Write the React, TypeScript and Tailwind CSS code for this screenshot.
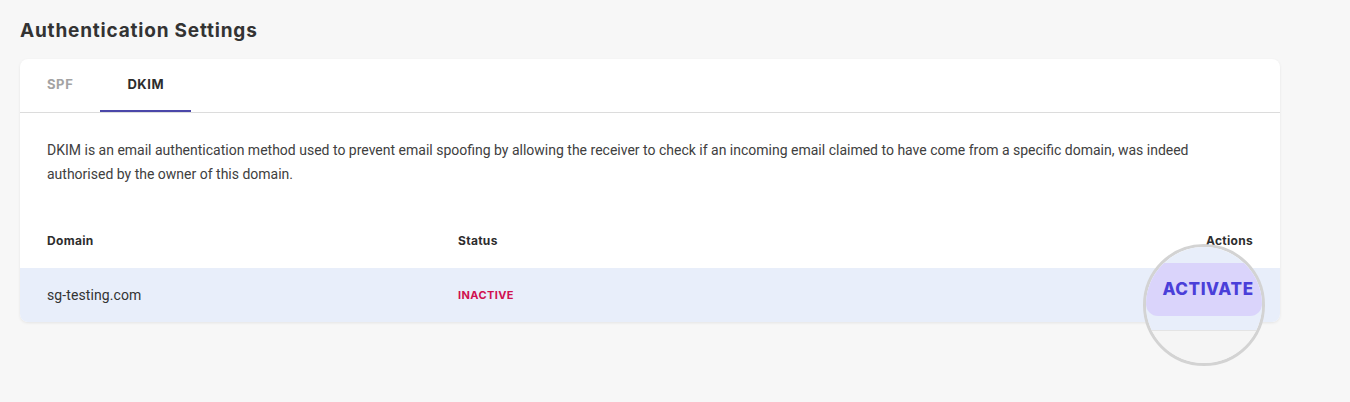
import React, { useState } from 'react';

const heading = { fontFamily: 'Inter, "DejaVu Sans", sans-serif' };
const body = { fontFamily: 'Roboto, "Liberation Sans", sans-serif' };

interface DomainRow {
  domain: string;
  status: 'ACTIVE' | 'INACTIVE';
}

const rows: DomainRow[] = [{ domain: 'sg-testing.com', status: 'INACTIVE' }];

// zoomed-in lens sitting over the activate button
const Magnifier: React.FC = () => (
  <div className="absolute left-[-110px] top-[-24px] w-[122px] h-[122px] rounded-full border-[3px] border-[#d3d3d3] overflow-hidden z-10">
    <div className="flex flex-col w-full h-full">
      <div className="h-[83px] bg-[#e8eefa] flex items-start pt-[16px] shrink-0">
        <div className="w-[116px] h-[53px] rounded-[12px] bg-[#dad4fb] flex items-center justify-center pl-[8px] text-[17px] font-extrabold tracking-[0.6px] text-[#4a3fd9]" style={heading}>
          ACTIVATE
        </div>
      </div>
      <div className="flex-1 bg-[#f5f5f5] border-t border-[#e4e4e4]" />
    </div>
  </div>
);

const App: React.FC = () => {
  const [tab, setTab] = useState<'SPF' | 'DKIM'>('DKIM');

  return (
    <div className="w-[1350px] h-[402px] bg-[#f7f7f7] px-5 pt-[17px]" style={body}>
      <h1 className="text-[19px] leading-[28px] font-bold tracking-[0.8px] text-[#333333]" style={heading}>
        Authentication Settings
      </h1>
      <div className="mt-[14px] w-[1260px] bg-white rounded-[8px] shadow-[0_1px_3px_rgba(0,0,0,0.08)]">
        <div className="flex h-[54px] border-b border-[#dcdcdc]">
          {(['SPF', 'DKIM'] as const).map(t => (
            <button
              key={t}
              onClick={() => setTab(t)}
              className={`px-[27px] h-full flex items-center text-[13px] font-bold tracking-[0.6px] border-b-2 mb-[-1px] ${
                tab === t ? 'text-[#2d2d2d] border-[#4b47a9]' : 'text-[#a3a3a3] border-transparent'
              }`}
              style={heading}
            >
              {t}
            </button>
          ))}
        </div>
        <div className="px-[27px]">
          <p className="pt-[25px] text-[14px] leading-[24px] text-[#404040]">
            DKIM is an email authentication method used to prevent email spoofing by allowing the receiver to check if an incoming email claimed to have come from a specific domain, was indeed authorised by the owner of this domain.
          </p>
        </div>
        <div className="mt-[27px]">
          <div className="flex items-center h-[55px] px-[27px] text-[12px] font-bold tracking-[0.3px] text-[#2d2d2d]" style={heading}>
            <div className="w-[411px]">Domain</div>
            <div className="flex-1">Status</div>
            <div className="text-right">Actions</div>
          </div>
          {rows.map(row => (
            <div key={row.domain} className="flex items-center h-[54px] px-[27px] bg-[#e8eefa] rounded-b-[8px]">
              <div className="w-[411px] text-[14px] tracking-[0.1px] text-[#333333]">{row.domain}</div>
              <div className="flex-1 text-[11px] font-bold text-[#d0114f] tracking-[0.4px]" style={heading}>
                {row.status}
              </div>
              <div className="relative w-0 h-full">
                <Magnifier />
              </div>
            </div>
          ))}
        </div>
      </div>
    </div>
  );
};

export default App;
